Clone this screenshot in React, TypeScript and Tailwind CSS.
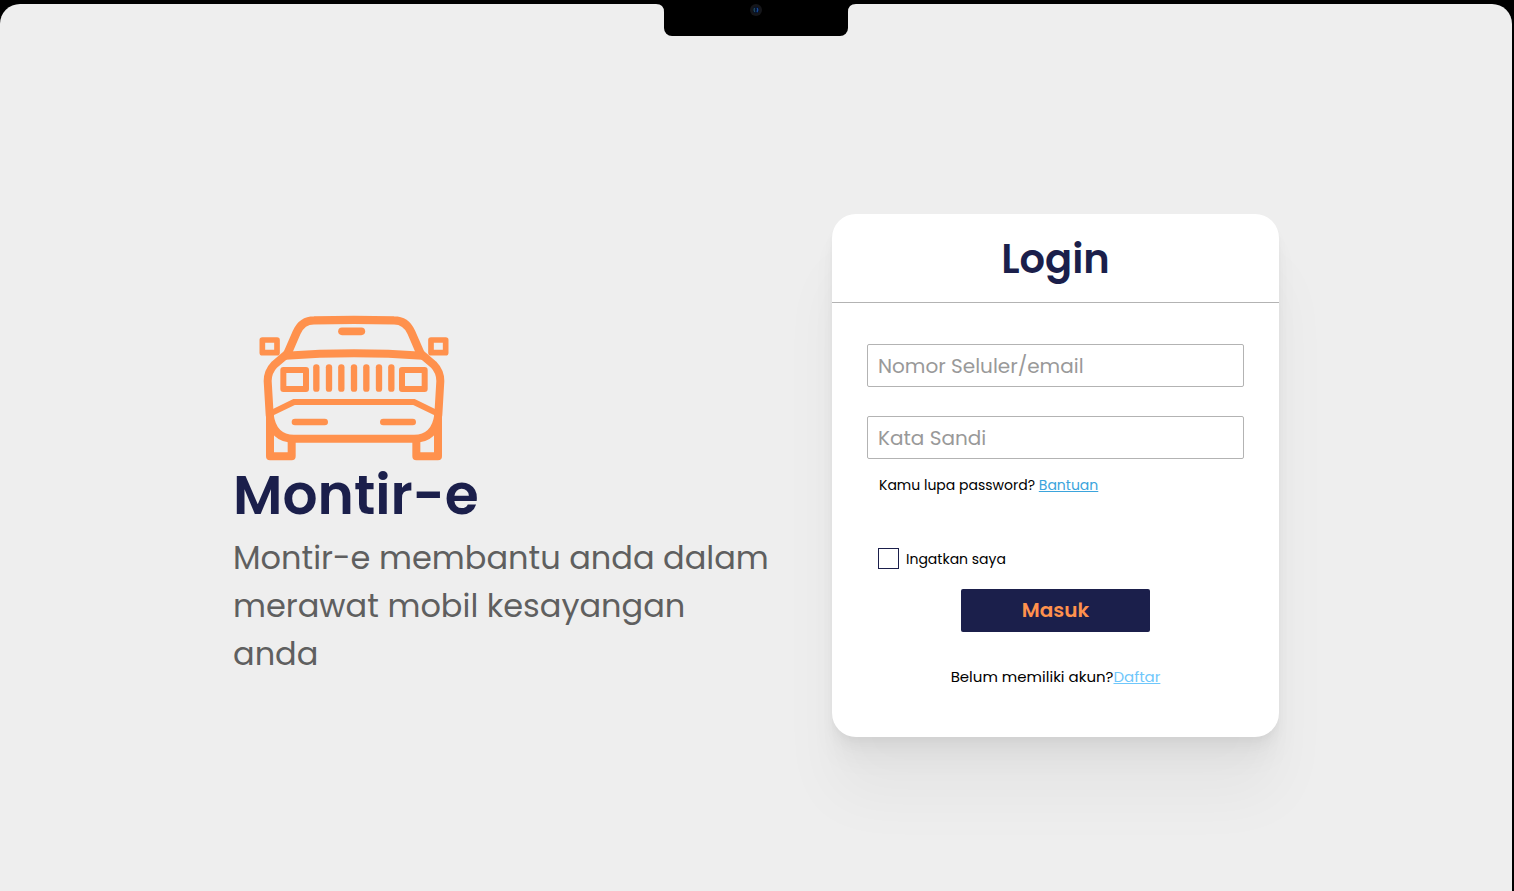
import { useState } from "react";

const GRILLE_BARS = [289, 327, 364, 402, 439, 477, 514];

function CarLogo() {
  return (
    <svg
      viewBox="118 46 568 438"
      className="ml-[26px] block h-[146px] w-[190px]"
      fill="none"
      stroke="#ff914d"
      aria-hidden="true"
    >
      <path
        d="M198 172L230 98Q246 62 282 62Q402 59 522 62Q558 62 574 98L606 172"
        strokeWidth="25"
      />
      <path d="M196 168Q402 154 608 168" strokeWidth="24" />
      <path
        d="M202 162L164 194Q143 216 143 244L149 345Q158 417 222 417H582Q646 417 655 345L661 244Q661 216 640 194L602 162"
        strokeWidth="24"
      />
      <path d="M152 341L222 307H582L652 341" strokeWidth="18" />
      <path
        d="M150 340V470H215V422M654 340V470H589V422"
        strokeWidth="24"
        strokeLinejoin="round"
      />
      <g strokeWidth="17" strokeLinejoin="round">
        <rect x="127" y="121" width="44" height="38" />
        <rect x="633" y="121" width="44" height="38" />
      </g>
      <g strokeWidth="18" strokeLinejoin="round">
        <rect x="190" y="211" width="68" height="57" />
        <rect x="546" y="211" width="68" height="57" />
      </g>
      <path d="M366 95H424" strokeWidth="23" strokeLinecap="round" />
      <path d="M225 367H314M490 367H578" strokeWidth="20" strokeLinecap="round" />
      {GRILLE_BARS.map((x) => (
        <path key={x} d={`M${x} 203V267`} strokeWidth="19" strokeLinecap="round" />
      ))}
    </svg>
  );
}

function Notch() {
  return (
    <div className="absolute left-1/2 top-0 flex -translate-x-1/2">
      <svg className="h-2 w-2" viewBox="0 0 8 8" aria-hidden="true">
        <path d="M0 0H8V8Q8 0 0 0Z" />
      </svg>
      <div className="flex h-8 w-[184px] justify-center rounded-b-lg bg-black">
        <svg className="h-3 w-3" viewBox="0 0 12 12" aria-hidden="true">
          <circle cx="6" cy="6" r="6" fill="#15161a" />
          <circle cx="6" cy="6" r="3.2" fill="#06122b" />
          <path d="M4.5 4Q3.5 6 4.8 8" stroke="#28525c" strokeWidth="1.2" fill="none" />
          <path d="M7.2 4Q8.4 6 7 8" stroke="#174a9c" strokeWidth="1.4" fill="none" />
        </svg>
      </div>
      <svg className="h-2 w-2" viewBox="0 0 8 8" aria-hidden="true">
        <path d="M8 0H0V8Q0 0 8 0Z" />
      </svg>
    </div>
  );
}

export default function App() {
  const [remember, setRemember] = useState(false);

  return (
    <div className="flex min-h-screen flex-col bg-black pr-0.5 pt-1 font-[Poppins,Inter,sans-serif] text-black">
      <main className="relative grow rounded-t-[20px] bg-[#eeeeee]">
        <Notch />
        <div className="mx-auto flex max-w-[1046px] items-start justify-between gap-8 pb-20 pt-[210px]">
          <section className="w-[540px] pt-[101px]">
            <CarLogo />
            <h1 className="pt-0.5 text-[55px] font-semibold leading-[64px] text-[#1b1f4b]">
              Montir-e
            </h1>
            <p className="mt-[7px] text-[32px] leading-[48px] text-[#5f5f5f]">
              Montir-e membantu anda dalam merawat mobil kesayangan anda
            </p>
          </section>

          <form
            onSubmit={(event) => event.preventDefault()}
            className="w-[447px] shrink-0 rounded-3xl bg-white pb-12 shadow-[0_4px_5px_rgba(0,0,0,0.02),0_10px_12px_rgba(0,0,0,0.03),0_24px_24px_rgba(0,0,0,0.03),0_60px_60px_rgba(0,0,0,0.04)]"
          >
            <h2 className="border-b border-[#b3b3b3] pb-[13px] pt-[15px] text-center text-[40px] font-semibold leading-[60px] text-[#1b1f4b]">
              Login
            </h2>
            <div className="flex flex-col px-[35px] pt-[41px]">
              <input
                type="text"
                aria-label="Nomor Seluler/email"
                placeholder="Nomor Seluler/email"
                className="h-[43px] rounded-xs border border-[#b3b3b3] px-2.5 text-[20px] placeholder:text-[#999999]"
              />
              <input
                type="password"
                aria-label="Kata Sandi"
                placeholder="Kata Sandi"
                className="mt-[29px] h-[43px] rounded-xs border border-[#b3b3b3] px-2.5 text-[20px] placeholder:text-[#999999]"
              />
              <p className="mt-4 px-3 text-[14px] leading-5">
                Kamu lupa password?{" "}
                <a href="#bantuan" className="text-[#3ba4dc] underline">
                  Bantuan
                </a>
              </p>
              <label className="mt-[53px] flex items-center gap-[7px] self-start pl-[11px] text-[14px] leading-5">
                <input
                  type="checkbox"
                  checked={remember}
                  onChange={(event) => setRemember(event.target.checked)}
                  className="h-[21px] w-[21px] appearance-none border border-[#1b1f4b] bg-white checked:bg-[#1b1f4b]"
                />
                Ingatkan saya
              </label>
              <button
                type="submit"
                className="mt-5 h-[43px] w-[189px] self-center rounded-xs bg-[#1b1f4b] pb-0.5 text-[20px] font-semibold text-[#ff914d]"
              >
                Masuk
              </button>
              <p className="mt-[34px] pb-px text-center text-[15px] leading-[22px]">
                Belum memiliki akun?
                <a href="#daftar" className="text-[#6fc7fb] underline">
                  Daftar
                </a>
              </p>
            </div>
          </form>
        </div>
      </main>
    </div>
  );
}
